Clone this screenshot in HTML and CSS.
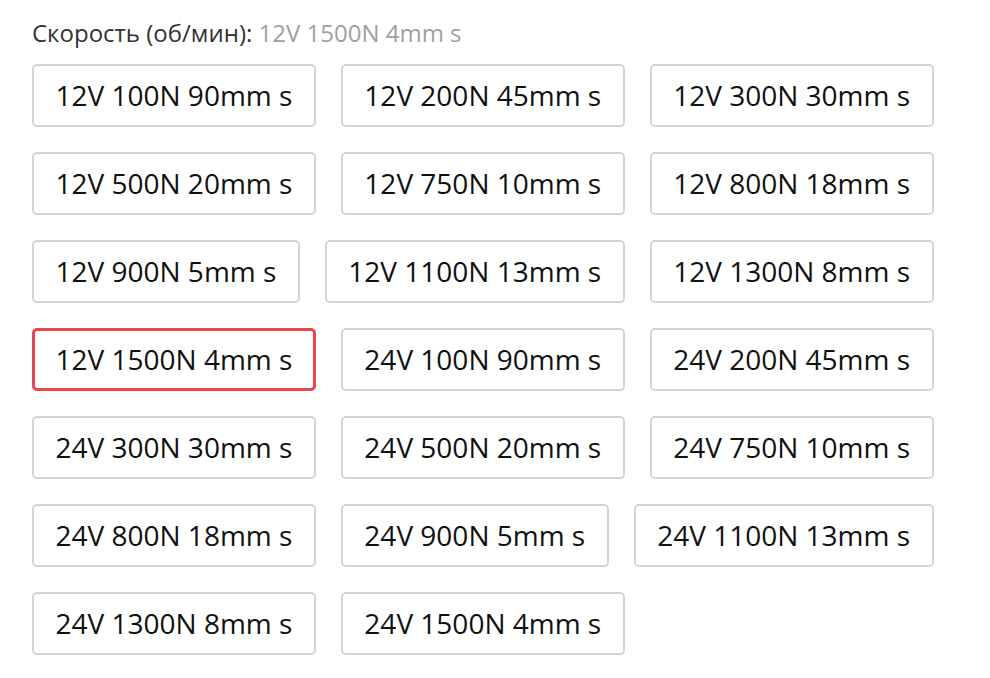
FILE: index.html
```html
<!DOCTYPE html>
<html lang="ru">
<head>
  <meta charset="UTF-8" />
  <meta name="viewport" content="width=device-width, initial-scale=1" />
  <title>Скорость</title>
  <link rel="stylesheet" href="styles.css">
</head>
<body>
  <div class="option">
    <div class="option-label">Скорость (об/мин): <span class="option-value">12V 1500N 4mm s</span></div>
    <div class="option-list">
      <button class="opt">12V 100N 90mm s</button>
      <button class="opt">12V 200N 45mm s</button>
      <button class="opt">12V 300N 30mm s</button>
      <button class="opt">12V 500N 20mm s</button>
      <button class="opt">12V 750N 10mm s</button>
      <button class="opt">12V 800N 18mm s</button>
      <button class="opt">12V 900N 5mm s</button>
      <button class="opt">12V 1100N 13mm s</button>
      <button class="opt">12V 1300N 8mm s</button>
      <button class="opt selected">12V 1500N 4mm s</button>
      <button class="opt">24V 100N 90mm s</button>
      <button class="opt">24V 200N 45mm s</button>
      <button class="opt">24V 300N 30mm s</button>
      <button class="opt">24V 500N 20mm s</button>
      <button class="opt">24V 750N 10mm s</button>
      <button class="opt">24V 800N 18mm s</button>
      <button class="opt">24V 900N 5mm s</button>
      <button class="opt">24V 1100N 13mm s</button>
      <button class="opt">24V 1300N 8mm s</button>
      <button class="opt">24V 1500N 4mm s</button>
    </div>
  </div>
</body>
</html>
```

FILE: styles.css
```css
body {
  font-family: 'Open Sans', 'Liberation Sans', sans-serif;
  background: #fff;
  margin: 0;
  padding: 16px 0 0 32px;
  color: #222;
}
.option {
  width: 915px;
}
.option-label {
  font-size: 24px;
  line-height: 34px;
  color: #333;
  margin-bottom: 14px;
}
.option-value {
  color: #a0a0a0;
}
.option-list {
  display: flex;
  flex-wrap: wrap;
  gap: 25px 25px;
}
.opt {
  font-family: inherit;
  font-size: 28px;
  line-height: 38px;
  color: #111;
  background: #fff;
  border: 2px solid #d4d4d4;
  border-radius: 5px;
  padding: 10px 21.5px 11px;
  cursor: pointer;
}
.opt.selected {
  border: 3px solid #e8474f;
  padding: 9px 20.5px 10px;
}
```
